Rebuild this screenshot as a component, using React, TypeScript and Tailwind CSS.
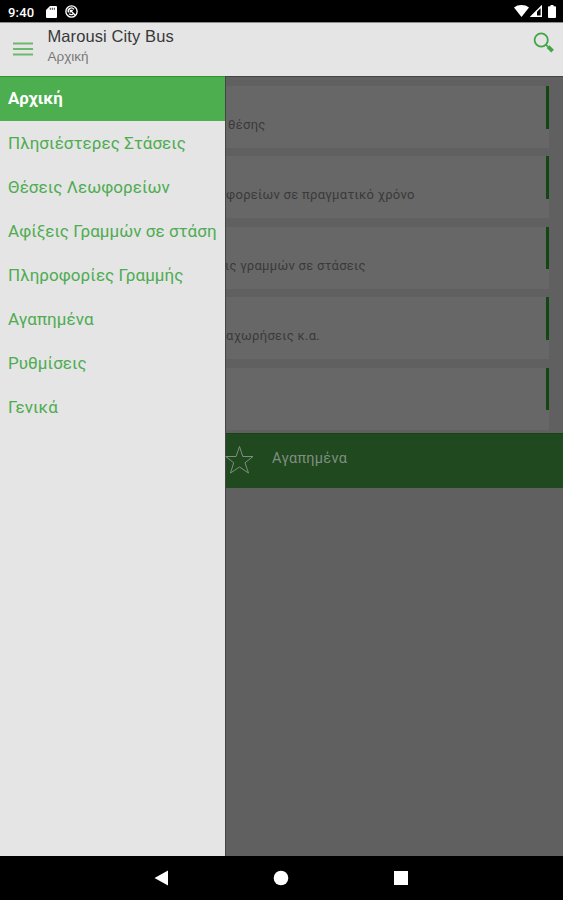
const MENU = [
  "Αρχική",
  "Πλησιέστερες Στάσεις",
  "Θέσεις Λεωφορείων",
  "Αφίξεις Γραμμών σε στάση",
  "Πληροφορίες Γραμμής",
  "Αγαπημένα",
  "Ρυθμίσεις",
  "Γενικά",
];

const CARDS = [
  { text: "θέσης", cls: "pl-[2px]" },
  { text: "φορείων σε πραγματικό χρόνο", cls: "pl-0" },
  { text: "ις γραμμών σε στάσεις", cls: "-ml-px" },
  { text: "αχωρήσεις κ.α.", cls: "pl-0" },
  { text: "", cls: "" },
];

function StatusBar() {
  return (
    <div className="flex h-[22px] shrink-0 items-center bg-black pl-2 text-white">
      <span className="w-[38px] pt-[2px] text-[13px] leading-none font-medium tracking-[0.2px]">9:40</span>
      <svg className="mt-px h-3 w-[11px]" viewBox="0 0 11 12" fill="currentColor">
        <path d="M4 0h6a1 1 0 0 1 1 1v10a1 1 0 0 1-1 1H1a1 1 0 0 1-1-1V4z" />
        <path d="M4.3 1.8v2M6.3 1.8v2M8.3 1.8v2" stroke="#000" strokeWidth="0.8" />
      </svg>
      <svg className="mt-px ml-2 h-[13px] w-[13px]" viewBox="0 0 13 13" fill="none" stroke="currentColor">
        <circle cx="6.5" cy="6.5" r="5.6" strokeWidth="1.4" />
        <path d="M3.5 7.5a3.200 3.200 0 0 1 5.500-3.200M4 8.800c1.500 1.200 3 1 4 .2M5.300 7.500V5.300h2.500M6 6l4.500 4.500" strokeWidth="1.3" />
      </svg>
      <div className="mr-[7px] ml-auto flex items-center">
        <svg className="h-3 w-[15px]" viewBox="0 0 15 12" fill="currentColor">
          <path d="M0 2.5C4-.8 11-.8 15 2.5L7.5 12z" />
        </svg>
        <svg className="ml-px h-3 w-3" viewBox="0 0 12 12" fill="none" stroke="currentColor">
          <path d="M11.300 1.400v9.900H1.400z" strokeWidth="1.400" />
          <path d="M.5 11.8 7 5.3v6.5z" fill="currentColor" stroke="none" />
        </svg>
        <svg className="ml-[6px] h-[13px] w-2" viewBox="0 0 8 13" fill="currentColor">
          <path d="M2.5 0h3v1.3H7a1 1 0 0 1 1 1V12a1 1 0 0 1-1 1H1a1 1 0 0 1-1-1V2.3a1 1 0 0 1 1-1h1.5z" />
        </svg>
      </div>
    </div>
  );
}

function Header() {
  return (
    <header className="flex h-[54px] shrink-0 border-t border-[#8b8b8b] bg-[#e5e5e5] font-['Liberation_Sans',sans-serif]">
      <svg className="mt-[18px] ml-[13px] h-[15px] w-5" viewBox="0 0 20 15" stroke="#6cb96d" strokeWidth="2">
        <path d="M0 2.5h20M0 8h20M0 13.5h20" />
      </svg>
      <div className="ml-[14.5px] pt-[4px]">
        <h1 className="text-[16.5px] leading-[19px] tracking-[0.1px] text-[#383838]">Marousi City Bus</h1>
        <p className="mt-[3px] text-[13.5px] leading-[16px] text-[#777]">Αρχική</p>
      </div>
      <svg className="mt-[9px] mr-[8px] ml-auto h-[22px] w-[22px]" viewBox="0 0 22 22" fill="none" stroke="#41a545">
        <circle cx="8.2" cy="8" r="6.6" strokeWidth="1.8" />
        <path d="m12.8 12.6 2 2" strokeWidth="1.8" />
        <path d="m15 14.7 4.600 4.400" strokeWidth="3.800" />
      </svg>
    </header>
  );
}

function Drawer() {
  return (
    <nav className="w-[225px] shrink-0 bg-[#e5e5e5]">
      {MENU.map((label, i) => (
        <div
          key={label}
          className={`flex items-center pl-2 whitespace-nowrap ${
            i === 0
              ? "h-[44.500px] border-t border-[#2c972c] bg-[#4cae4f] text-[16.800px] font-bold text-white"
              : "h-[44px] pt-[2px] text-[17px] tracking-[0.060px] text-[#4eac51]"
          }`}
        >
          {label}
        </div>
      ))}
    </nav>
  );
}

function Content() {
  return (
    <main className="flex min-w-0 flex-1 flex-col border-t border-l border-[#454545] bg-[#606060]">
      <div className="flex h-[356px] shrink-0 flex-col gap-[8.4px] pt-[9px] pr-[14px]">
        {CARDS.map((c, i) => (
          <div key={i} className="flex h-[62px] shrink-0 justify-between bg-[#676767]">
            <p className={`pt-[29px] text-[13px] leading-[20px] tracking-[0.28px] whitespace-nowrap text-[#3a3a3a] ${c.cls}`}>
              {c.text}
            </p>
            <div className="h-[42.5px] w-[3.5px] bg-[#124711]" />
          </div>
        ))}
      </div>
      <div className="flex h-[55px] shrink-0 items-center border-t border-[#194119] bg-[#20491f] text-[#7f8f7f]">
        <svg className="mb-[2px] -ml-px h-[30px] w-[30px]" viewBox="0 0 30 30" fill="none" stroke="currentColor">
          <path d="M14.5 1.5 17.8 11.5H28L20 17.8 23.5 28 14.5 22 5.5 28 8.7 17.8.8 11.5h10.3z" />
        </svg>
        <span className="mb-[5px] ml-[17px] text-[14.5px] tracking-[0.3px]">Αγαπημένα</span>
      </div>
    </main>
  );
}

function NavBar() {
  return (
    <div className="flex h-[44px] shrink-0 items-center justify-center bg-black pr-px text-white">
      <svg className="h-4 w-[254px]" viewBox="0 0 254 16" fill="currentColor">
        <path d="M.5 8 14 .5v15z" />
        <circle cx="127" cy="8" r="7.3" />
        <path d="M240 1h14v14h-14z" />
      </svg>
    </div>
  );
}

export default function App() {
  return (
    <div className="flex h-[900px] w-[563px] flex-col overflow-hidden bg-black font-[Roboto,'Noto_Sans',sans-serif]">
      <StatusBar />
      <Header />
      <div className="flex min-h-0 flex-1">
        <Drawer />
        <Content />
      </div>
      <NavBar />
    </div>
  );
}
